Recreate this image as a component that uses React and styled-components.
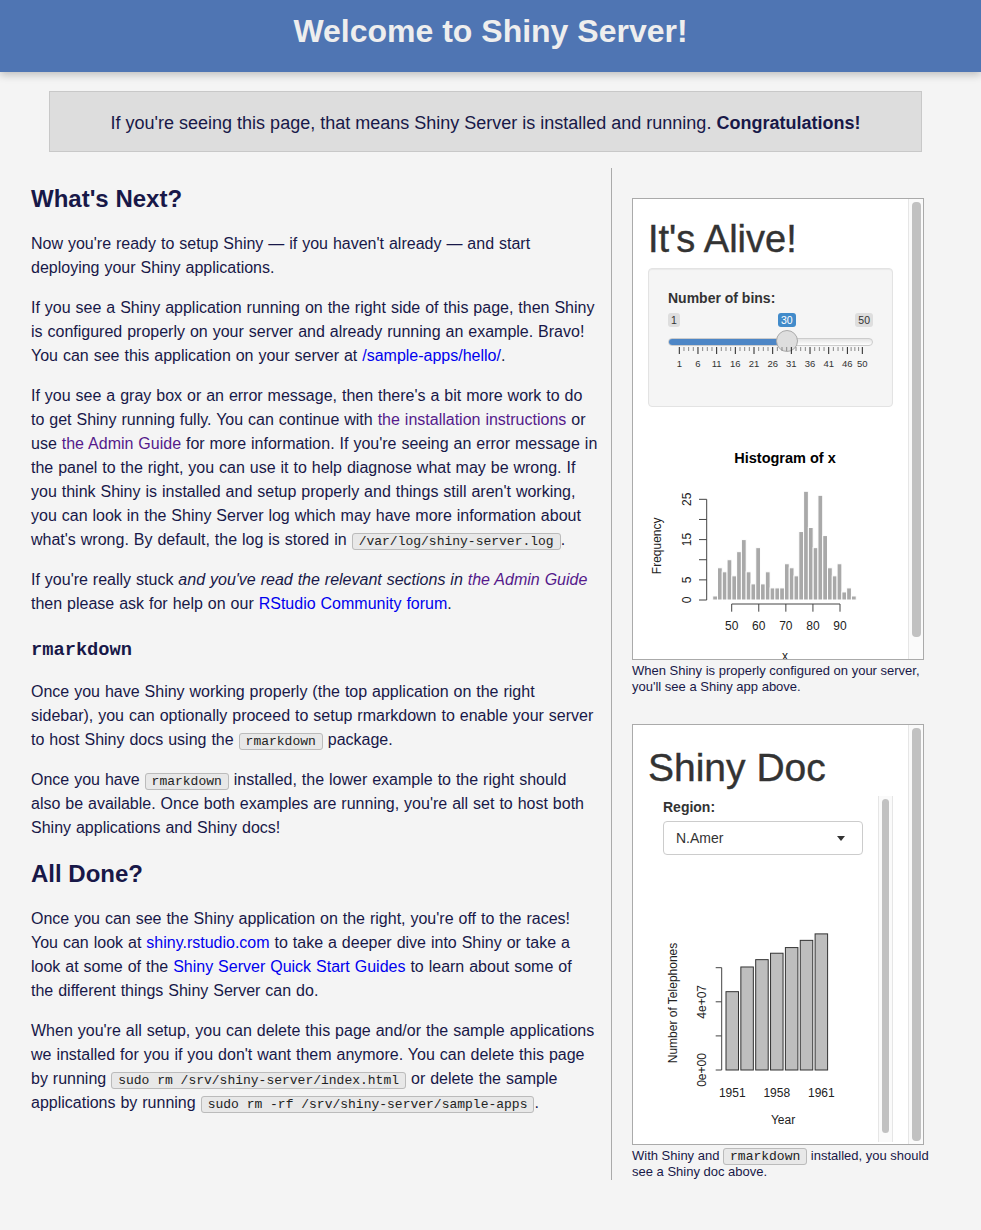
import React from 'react';
import styled, { createGlobalStyle } from 'styled-components';

const GlobalStyle = createGlobalStyle`
  body {
    margin: 0;
    background: #f4f4f4;
    color: #181848;
    font-family: "Liberation Sans", Arial, Helvetica, sans-serif;
  }
`;

const Header = styled.header`
  height: 72px;
  box-sizing: border-box;
  padding-top: 13px;
  background: #4f75b3;
  box-shadow: 0 3px 8px rgba(0, 0, 0, 0.22);
  text-align: center;
`;

const Title = styled.h1`
  margin: 0;
  font-size: 32px;
  line-height: 36px;
  font-weight: bold;
  color: #eeeeee;
`;

const Notice = styled.div`
  margin: 19px 59px 0 49px;
  height: 61px;
  box-sizing: border-box;
  padding-top: 3px;
  border: 1px solid #c8c8c8;
  background: #dddddd;
  display: flex;
  align-items: center;
  justify-content: center;
  font-size: 18px;
`;

const Main = styled.div`
  display: flex;
  align-items: flex-start;
  margin-top: 13px;
  padding-left: 31px;
`;

const Content = styled.div`
  flex: 0 0 567.45px;
  margin-right: 12.55px;
  font-size: 16px;
  line-height: 24px;
  word-spacing: 0.5px;
`;

const H2 = styled.h2`
  margin: 20px 0 19px;
  font-size: 24px;
  line-height: 28px;
  font-weight: bold;
  word-spacing: 0;
`;

const H3 = styled.h3`
  margin: 22px 0 18px;
  font-family: "Liberation Mono", "Courier New", monospace;
  font-size: 18.72px;
  line-height: 24px;
  font-weight: bold;
`;

const P = styled.p`
  margin: 16px 0;
`;

const Link = styled.a`
  color: ${p => (p.$visited ? '#551a8b' : '#0000ee')};
  text-decoration: none;
  cursor: pointer;
`;

const Code = styled.code`
  font-family: "Liberation Mono", "Courier New", monospace;
  font-size: 13px;
  line-height: 14px;
  word-spacing: 0;
  padding: 0 6px;
  border: 1px solid #bbbbbb;
  border-radius: 3px;
  background: #e8e8e8;
  color: #222;
`;

const Sidebar = styled.aside`
  flex: 0 0 310px;
  margin-top: 3px;
  padding: 30px 0 0 20px;
  border-left: 1px solid #aaaaaa;
`;

const Frame = styled.div`
  display: flex;
  width: 292px;
  height: ${p => p.$h}px;
  box-sizing: border-box;
  border: 1px solid #aaaaaa;
  background: #ffffff;
  overflow: hidden;
`;

const FrameBody = styled.div`
  flex: 1;
  min-width: 0;
  overflow: hidden;
  color: #333333;
`;

const Track = styled.div`
  flex: 0 0 15px;
  box-sizing: border-box;
  display: flex;
  border-left: 1px solid #e6e6e6;
  border-right: ${p => (p.$inner ? '1px solid #e6e6e6' : 'none')};
  background: #fafafa;
  padding: 3px ${p => (p.$inner ? 3 : 2)}px ${p => p.$bottom}px 3px;
`;

const Thumb = styled.div`
  flex: 1;
  background: #c1c1c1;
  border-radius: 4px;
`;

const Container = styled.div`
  padding: 0 15px;
`;

const AppTitle = styled.h2`
  margin: ${p => p.$top}px 0 ${p => p.$bottom}px;
  font-size: ${p => p.$size}px;
  line-height: ${p => p.$size + 4}px;
  font-weight: normal;
  color: #333333;
  -webkit-text-stroke: 0.4px #333333;
`;

const Well = styled.div`
  padding: 19px;
  background: #f5f5f5;
  border: 1px solid #e3e3e3;
  border-radius: 4px;
  box-shadow: inset 0 1px 1px rgba(0, 0, 0, 0.05);
`;

const Label = styled.div`
  font-size: 14px;
  line-height: 20px;
  font-weight: bold;
  color: #333333;
  margin-bottom: ${p => p.$gap}px;
`;

const Slider = styled.div`
  position: relative;
  height: 60px;
  margin-bottom: 14px;
`;

const Badge = styled.span`
  position: absolute;
  top: 0;
  ${p => (p.$right ? 'right: 0;' : `left: ${p.$left}px;`)}
  height: 14px;
  padding: 0 3px;
  border-radius: 3px;
  font-size: 10.5px;
  line-height: 14px;
  background: ${p => (p.$active ? '#428bca' : '#dedede')};
  color: ${p => (p.$active ? '#ffffff' : '#333333')};
`;

const Rail = styled.div`
  position: absolute;
  top: 25px;
  left: 0;
  right: 0;
  height: 8px;
  box-sizing: border-box;
  border: 1px solid #cccccc;
  border-radius: 4px;
  background: linear-gradient(#e4e4e4, #ffffff);
  overflow: hidden;
`;

const RailFill = styled.div`
  height: 100%;
  background: #4d86c6;
`;

const Handle = styled.div`
  position: absolute;
  top: 17px;
  left: 108px;
  width: 22px;
  height: 22px;
  box-sizing: border-box;
  border: 1px solid #aaaaaa;
  border-radius: 50%;
  background: #dedede;
`;

const Grid = styled.svg`
  position: absolute;
  top: 34px;
  left: 0;
`;

const Caption = styled.div`
  margin-top: 3px;
  font-size: 13px;
  line-height: 16px;
`;

const Spacer = styled.div`
  height: 29px;
`;

const InnerFrame = styled.div`
  display: flex;
  height: 346px;
`;

const InnerBody = styled.div`
  flex: 1;
  min-width: 0;
  overflow: hidden;
`;

const Form = styled.div`
  padding: 1px 0 0 15px;
`;

const Select = styled.div`
  width: 200px;
  height: 34px;
  box-sizing: border-box;
  border: 1px solid #cccccc;
  border-radius: 4px;
  padding: 0 17px 0 12px;
  display: flex;
  align-items: center;
  justify-content: space-between;
  font-size: 14px;
  color: #333333;
`;

const Caret = styled.span`
  width: 0;
  height: 0;
  border-left: 4.5px solid transparent;
  border-right: 4.5px solid transparent;
  border-top: 5px solid #333333;
`;

const Plot = styled.svg`
  display: block;
  margin-top: ${p => p.$top}px;
  font-family: "Liberation Sans", Arial, sans-serif;
`;

const counts = [1, 8, 7, 10, 6, 12, 15, 7, 4, 13, 4, 7, 3, 3, 3, 9, 8, 6, 17, 27, 18, 13, 26, 16, 8, 6, 9, 2, 3, 1];
const phones = [45939, 60423, 64721, 68484, 71799, 76036, 79831];

const gridValues = [1, 6, 11, 16, 21, 26, 31, 36, 41, 46, 50];
const gx = v => 11.3 + (v - 1) * 3.735;

function SliderGrid() {
  const minor = [];
  for (let i = 0; i < gridValues.length - 1; i++) {
    const a = gx(gridValues[i]);
    const b = gx(gridValues[i + 1]);
    for (let k = 1; k < 4; k++) minor.push(a + ((b - a) * k) / 4);
  }
  return (
    <Grid width="205" height="26">
      {minor.map((x, i) => (
        <line key={'m' + i} x1={x} x2={x} y1="0" y2="4" stroke="#888" strokeWidth="1" />
      ))}
      {gridValues.map(v => (
        <g key={v}>
          <line x1={gx(v)} x2={gx(v)} y1="0" y2="7" stroke="#222" strokeWidth="1" />
          <text x={gx(v)} y="19.5" fontSize="9.5" textAnchor="middle" fill="#333">
            {v}
          </text>
        </g>
      ))}
    </Grid>
  );
}

function Histogram() {
  const unitY = 4.027;
  const barW = 4.784;
  const xTicks = [50, 60, 70, 80, 90];
  const xPos = v => 98.7 + (v - 50) * 2.7075;
  const yTicks = [0, 5, 10, 15, 20, 25];
  return (
    <Plot width="275" height="240" $top={13}>
      <text x="152" y="43" fontSize="14.5" fontWeight="bold" textAnchor="middle" fill="#000">
        Histogram of x
      </text>
      {counts.map((c, i) => (
        <rect
          key={i}
          x={79.7 + i * barW}
          y={180 - c * unitY}
          width={barW}
          height={c * unitY}
          fill="#a9a9a9"
          stroke="#ffffff"
          strokeWidth="1"
        />
      ))}
      <line x1="73.7" x2="73.7" y1="79.3" y2="180" stroke="#444" />
      {yTicks.map(t => (
        <line key={t} x1="66" x2="73.7" y1={180 - t * unitY} y2={180 - t * unitY} stroke="#444" />
      ))}
      {[0, 5, 15, 25].map(t => (
        <text
          key={t}
          x="58"
          y={180 - t * unitY}
          fontSize="12"
          textAnchor="middle"
          fill="#222"
          transform={`rotate(-90 58 ${180 - t * unitY})`}
        >
          {t}
        </text>
      ))}
      <text x="28.5" y="125.8" fontSize="12" textAnchor="middle" fill="#222" transform="rotate(-90 28.5 125.8)">
        Frequency
      </text>
      <line x1="98.7" x2="207" y1="184" y2="184" stroke="#444" />
      {xTicks.map(t => (
        <g key={t}>
          <line x1={xPos(t)} x2={xPos(t)} y1="184" y2="191.7" stroke="#444" />
          <text x={xPos(t)} y="210" fontSize="12" textAnchor="middle" fill="#222">
            {t}
          </text>
        </g>
      ))}
      <text x="152" y="239.5" fontSize="12" textAnchor="middle" fill="#222">
        x
      </text>
    </Plot>
  );
}

function PhonePlot() {
  const scale = 0.001705;
  const step = 14.85;
  const w = 12.5;
  const yt = [0, 2e4, 4e4, 6e4];
  const barX = i => 78 + i * step;
  return (
    <Plot width="230" height="280" $top={5}>
      {phones.map((v, i) => (
        <rect
          key={i}
          x={barX(i)}
          y={210 - v * scale}
          width={w}
          height={v * scale}
          fill="#bebebe"
          stroke="#333"
          strokeWidth="1"
        />
      ))}
      <line x1="73.7" x2="73.7" y1={210 - 6e4 * scale} y2="210" stroke="#444" />
      {yt.map(t => (
        <line key={t} x1="67.7" x2="73.7" y1={210 - t * scale} y2={210 - t * scale} stroke="#444" />
      ))}
      {[
        ['0e+00', 0],
        ['4e+07', 4e4]
      ].map(([l, t]) => (
        <text
          key={l}
          x="58.3"
          y={210 - t * scale}
          fontSize="12"
          textAnchor="middle"
          fill="#222"
          transform={`rotate(-90 58.3 ${210 - t * scale})`}
        >
          {l}
        </text>
      ))}
      <text x="28.5" y="143" fontSize="12" textAnchor="middle" fill="#222" transform="rotate(-90 28.5 143)">
        Number of Telephones
      </text>
      {[
        ['1951', 0],
        ['1958', 3],
        ['1961', 6]
      ].map(([l, i]) => (
        <text key={l} x={barX(i) + w / 2} y="237.3" fontSize="12" textAnchor="middle" fill="#222">
          {l}
        </text>
      ))}
      <text x="135" y="264" fontSize="12" textAnchor="middle" fill="#222">
        Year
      </text>
    </Plot>
  );
}

export default function App() {
  return (
    <>
      <GlobalStyle />
      <Header>
        <Title>Welcome to Shiny Server!</Title>
      </Header>
      <Notice>
        <span>
          If you're seeing this page, that means Shiny Server is installed and running.{' '}
          <b>Congratulations!</b>
        </span>
      </Notice>
      <Main>
        <Content>
          <H2>What's Next?</H2>
          <P>
            Now you're ready to setup Shiny — if you haven't already — and start deploying your Shiny
            applications.
          </P>
          <P>
            If you see a Shiny application running on the right side of this page, then Shiny is configured
            properly on your server and already running an example. Bravo! You can see this application on
            your server at <Link>/sample-apps/hello/</Link>.
          </P>
          <P>
            If you see a gray box or an error message, then there's a bit more work to do to get Shiny running
            fully. You can continue with <Link $visited>the installation instructions</Link> or use{' '}
            <Link $visited>the Admin Guide</Link> for more information. If you're seeing an error message in
            the panel to the right, you can use it to help diagnose what may be wrong. If you think Shiny is
            installed and setup properly and things still aren't working, you can look in the Shiny Server log
            which may have more information about what's wrong. By default, the log is stored in{' '}
            <Code>/var/log/shiny-server.log</Code>.
          </P>
          <P>
            If you're really stuck{' '}
            <em>
              and you've read the relevant sections in <Link $visited>the Admin Guide</Link>
            </em>{' '}
            then please ask for help on our <Link>RStudio Community forum</Link>.
          </P>
          <H3>rmarkdown</H3>
          <P>
            Once you have Shiny working properly (the top application on the right sidebar), you can optionally
            proceed to setup rmarkdown to enable your server to host Shiny docs using the <Code>rmarkdown</Code>{' '}
            package.
          </P>
          <P>
            Once you have <Code>rmarkdown</Code> installed, the lower example to the right should also be
            available. Once both examples are running, you're all set to host both Shiny applications and Shiny
            docs!
          </P>
          <H2>All Done?</H2>
          <P>
            Once you can see the Shiny application on the right, you're off to the races! You can look at{' '}
            <Link>shiny.rstudio.com</Link> to take a deeper dive into Shiny or take a look at some of the{' '}
            <Link>Shiny Server Quick Start Guides</Link> to learn about some of the different things Shiny
            Server can do.
          </P>
          <P>
            When you're all setup, you can delete this page and/or the sample applications we installed for you
            if you don't want them anymore. You can delete this page by running{' '}
            <Code>sudo rm /srv/shiny-server/index.html</Code> or delete the sample applications by running{' '}
            <Code>sudo rm -rf /srv/shiny-server/sample-apps</Code>.
          </P>
        </Content>

        <Sidebar>
          <Frame $h={462}>
            <FrameBody>
              <Container>
                <AppTitle $size={38} $top={19} $bottom={8}>
                  It's Alive!
                </AppTitle>
                <Well>
                  <Label $gap={5}>Number of bins:</Label>
                  <Slider>
                    <Badge $left={0}>1</Badge>
                    <Badge $left={110} $active>
                      30
                    </Badge>
                    <Badge $right>50</Badge>
                    <Rail>
                      <RailFill style={{ width: '120px' }} />
                    </Rail>
                    <Handle />
                    <SliderGrid />
                  </Slider>
                </Well>
              </Container>
              <Histogram />
            </FrameBody>
            <Track $bottom={22}>
              <Thumb />
            </Track>
          </Frame>
          <Caption>
            When Shiny is properly configured on your server, you'll see a Shiny app above.
          </Caption>

          <Spacer />

          <Frame $h={421}>
            <FrameBody>
              <Container>
                <AppTitle $size={39} $top={21} $bottom={7}>
                  Shiny Doc
                </AppTitle>
                <InnerFrame>
                  <InnerBody>
                    <Form>
                      <Label $gap={4}>Region:</Label>
                      <Select>
                        <span>N.Amer</span>
                        <Caret />
                      </Select>
                    </Form>
                    <PhonePlot />
                  </InnerBody>
                  <Track $inner $bottom={9}>
                    <Thumb />
                  </Track>
                </InnerFrame>
              </Container>
            </FrameBody>
            <Track $bottom={3}>
              <Thumb />
            </Track>
          </Frame>
          <Caption>
            With Shiny and <Code>rmarkdown</Code> installed, you should see a Shiny doc above.
          </Caption>
        </Sidebar>
      </Main>
    </>
  );
}
